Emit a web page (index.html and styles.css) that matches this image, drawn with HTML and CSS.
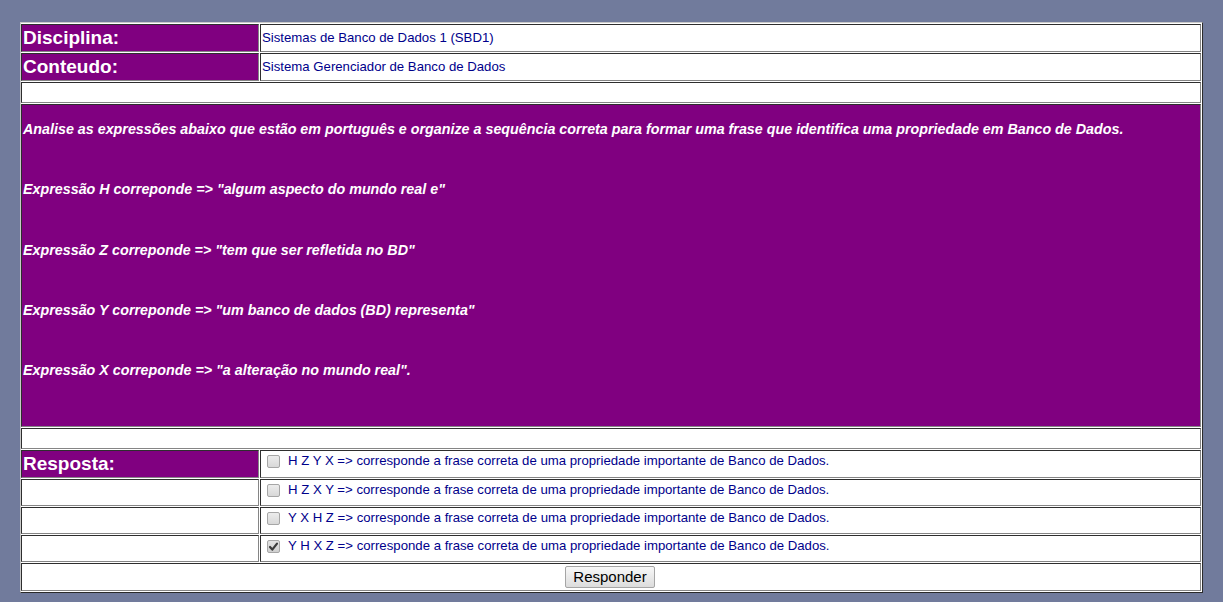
FILE: index.html
```html
<!DOCTYPE html>
<html lang="pt">
<head>
<meta charset="utf-8">
<title>Questão</title>
<link rel="stylesheet" href="styles.css">
</head>
<body>
<div class="page">
  <div class="sheet">
    <div class="cell head">Disciplina:</div>
    <div class="cell val">Sistemas de Banco de Dados 1 (SBD1)</div>
    <div class="cell head">Conteudo:</div>
    <div class="cell val">Sistema Gerenciador de Banco de Dados</div>
    <div class="cell span"></div>
    <div class="cell span question">
      <p>Analise as expressões abaixo que estão em português e organize a sequência correta para formar uma frase que identifica uma propriedade em Banco de Dados.</p>
      <p>Expressão H correponde =&gt; "algum aspecto do mundo real e"</p>
      <p>Expressão Z correponde =&gt; "tem que ser refletida no BD"</p>
      <p>Expressão Y correponde =&gt; "um banco de dados (BD) representa"</p>
      <p>Expressão X correponde =&gt; "a alteração no mundo real".</p>
    </div>
    <div class="cell span"></div>
    <div class="cell head">Resposta:</div>
    <div class="cell opt"><span class="check"></span><span class="label">H Z Y X =&gt; corresponde a frase correta de uma propriedade importante de Banco de Dados.</span></div>
    <div class="cell"></div>
    <div class="cell opt"><span class="check"></span><span class="label">H Z X Y =&gt; corresponde a frase correta de uma propriedade importante de Banco de Dados.</span></div>
    <div class="cell"></div>
    <div class="cell opt"><span class="check"></span><span class="label">Y X H Z =&gt; corresponde a frase correta de uma propriedade importante de Banco de Dados.</span></div>
    <div class="cell"></div>
    <div class="cell opt"><span class="check checked"><svg viewBox="0 0 13 13" width="13" height="13"><path d="M3 7 L5.3 9.6 L10 3.6" fill="none" stroke="#3a3a3a" stroke-width="2.2" stroke-linecap="round" stroke-linejoin="round"/></svg></span><span class="label">Y H X Z =&gt; corresponde a frase correta de uma propriedade importante de Banco de Dados.</span></div>
    <div class="cell span actions"><button class="btn" type="button">Responder</button></div>
  </div>
</div>
</body>
</html>
```

FILE: styles.css
```css
html, body {
  margin: 0;
  padding: 0;
  background: #717b9c;
}

.page {
  padding: 22px 20px 0 20px;
  font-family: "Liberation Sans", Arial, sans-serif;
}

.sheet {
  box-sizing: border-box;
  width: 1183px;
  display: grid;
  grid-template-columns: 238px 1fr;
  grid-template-rows: 28px 28px 21px 323px 21px 28px 27px 27px 27px 28px;
  gap: 1px;
  padding: 1px 1px 1px 0;
  background: #ffffff;
  border: 1px solid;
  border-color: #c9c9c9 #2a2a2a #2a2a2a #c9c9c9;
}

.cell {
  box-sizing: border-box;
  background: #ffffff;
  border: 1px solid;
  border-color: #2e2e2e #858585 #858585 #2e2e2e;
  min-width: 0;
}

.span {
  grid-column: 1 / 3;
}

.head {
  background: #800080;
  color: #ffffff;
  font-weight: bold;
  font-size: 19px;
  line-height: 22px;
  padding-left: 1px;
  display: flex;
  align-items: center;
}

.val {
  color: #00008b;
  font-size: 13.2px;
  line-height: 15px;
  padding: 0 0 1px 1px;
  display: flex;
  align-items: center;
}

.question {
  background: #800080;
  color: #ffffff;
  font-weight: bold;
  font-style: italic;
  font-size: 14.3px;
  line-height: 16px;
  padding: 16px 0 0 1px;
  display: flex;
  flex-direction: column;
  gap: 44.3px;
}

.question p {
  margin: 0;
}

.opt {
  display: flex;
  align-items: flex-start;
  padding: 4px 0 0 1px;
  color: #00008b;
  font-size: 13.2px;
  line-height: 15px;
}

.check {
  box-sizing: border-box;
  flex: none;
  width: 13px;
  height: 13px;
  margin-left: 5px;
  margin-right: 8px;
  border: 1px solid #a6a6a6;
  border-radius: 2px;
  background: linear-gradient(#ececec, #d8d8d8);
  display: flex;
  align-items: center;
  justify-content: center;
}

.check svg {
  display: block;
  flex: none;
}

.check.checked {
  background: linear-gradient(#e2e2e2, #cfcfcf);
}

.label {
  margin-top: -2px;
  white-space: nowrap;
}

.actions {
  display: flex;
  align-items: center;
  justify-content: center;
}

.btn {
  box-sizing: border-box;
  height: 22px;
  width: 90px;
  padding: 0;
  margin: 0 0 0 -2px;
  font-family: "Liberation Sans", Arial, sans-serif;
  font-size: 15px;
  line-height: 20px;
  color: #000000;
  border: 1px solid #a5a5a5;
  border-radius: 2px;
  background: linear-gradient(#f8f8f8, #dcdcdc);
}
```
